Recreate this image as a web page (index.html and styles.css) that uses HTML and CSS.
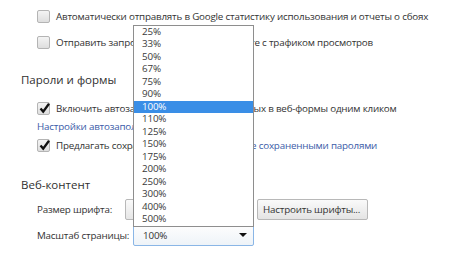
FILE: index.html
```html
<!DOCTYPE html>
<html lang="ru">
<head>
<meta charset="utf-8">
<link rel="stylesheet" href="styles.css">
</head>
<body>
<div class="page">
  <div class="row r1">
    <span class="cb"></span>
    <span class="txt">Автоматически отправлять в Google статистику использования и отчеты о сбоях</span>
  </div>
  <div class="row r2">
    <span class="cb"></span>
    <span class="txt">Отправить запрос «Не отслеживать» вместе с трафиком просмотров</span>
  </div>

  <h2 class="head h1">Пароли и формы</h2>
  <div class="row r3">
    <span class="cb"><svg viewBox="0 0 13 13" width="13" height="13"><path d="M2.5 6.5 L5.2 9.6 L11 1.8" fill="none" stroke="#111" stroke-width="2.3"/></svg></span>
    <span class="txt">Включить автозаполнение для ввода данных в веб-формы одним кликом</span>
  </div>
  <a class="link autofill">Настройки автозаполнения</a>
  <div class="row r4">
    <span class="cb"><svg viewBox="0 0 13 13" width="13" height="13"><path d="M2.5 6.5 L5.2 9.6 L11 1.8" fill="none" stroke="#111" stroke-width="2.3"/></svg></span>
    <span class="txt">Предлагать сохранять пароли. <a class="link">Управление сохраненными паролями</a></span>
  </div>

  <h2 class="head h2">Веб-контент</h2>
  <div class="frow font">
    <span class="lbl">Размер шрифта:</span>
    <span class="sel fontsel">Средний</span>
    <span class="btn">Настроить шрифты...</span>
  </div>
  <div class="frow zoom">
    <span class="lbl">Масштаб страницы:</span>
    <span class="sel zoomsel">
      <span class="val">100%</span>
      <span class="arrow"></span>
      <ul class="menu">
        <li>25%</li><li>33%</li><li>50%</li><li>67%</li><li>75%</li><li>90%</li>
        <li class="on">100%</li><li>110%</li><li>125%</li><li>150%</li><li>175%</li>
        <li>200%</li><li>250%</li><li>300%</li><li>400%</li><li>500%</li>
      </ul>
    </span>
  </div>
</div>
</body>
</html>
```

FILE: styles.css
```css
html, body {
  margin: 0;
  padding: 0;
  background: #fff;
}
body {
  font-family: "Open Sans", "Noto Sans", sans-serif;
  font-size: 9.8px;
  letter-spacing: -0.2px;
  color: #333;
  width: 474px;
  height: 260px;
  overflow: hidden;
}
.page {
  padding-left: 21px;
}
.row {
  display: flex;
  align-items: center;
  height: 20px;
  margin-left: 16px;
  white-space: nowrap;
}
.r1 { margin-top: 6px; }
.r2 { margin-top: 6px; }
.cb {
  width: 11px;
  height: 11px;
  border: 1px solid #b4b4b4;
  border-radius: 2px;
  background: linear-gradient(#f4f4f4, #dedede);
  margin-right: 6px;
  position: relative;
  flex: none;
}
.cb svg {
  position: absolute;
  left: 0;
  top: -1px;
}
.head {
  margin: 0;
  font-weight: normal;
  font-size: 11.5px;
  letter-spacing: 0;
  height: 20px;
  line-height: 20px;
  color: #303030;
}
.h1 { margin-top: 18px; }
.r3 { margin-top: 8px; }
.link {
  color: #3b5ba8;
  text-decoration: none;
}
.autofill {
  display: block;
  margin-left: 16px;
  height: 17px;
  line-height: 17px;
}
.r4 { margin-top: 0; }
.h2 { margin-top: 20px; }
.frow {
  display: flex;
  align-items: center;
  margin-left: 16px;
  white-space: nowrap;
}
.font { margin-top: 3px; height: 22px; }
.zoom { margin-top: 4px; height: 22px; }
.font .lbl { margin-right: 13px; }
.zoom .lbl { margin-right: 4px; }
.sel {
  box-sizing: border-box;
  height: 21px;
  border: 1px solid #b8b8b8;
  border-radius: 2px;
  background: linear-gradient(#fafafa, #e6e6e6);
  display: flex;
  align-items: center;
  padding-left: 9px;
  position: relative;
}
.fontsel { width: 128px; margin-right: 4px; }
.btn {
  box-sizing: border-box;
  height: 21px;
  width: 111px;
  padding: 0 5px;
  border: 1px solid #b8b8b8;
  border-radius: 2px;
  background: linear-gradient(#fafafa, #e4e4e4);
  display: flex;
  align-items: center;
}
.zoomsel {
  width: 121px;
  border-color: #8ab6e6;
  background: linear-gradient(#fdfdfd, #eef3f8);
}
.val { flex: 1; }
.arrow {
  width: 0;
  height: 0;
  border-left: 4px solid transparent;
  border-right: 4px solid transparent;
  border-top: 4px solid #111;
  margin-right: 6px;
}
.menu {
  position: absolute;
  left: -1px;
  bottom: 100%;
  width: 121px;
  box-sizing: border-box;
  margin: 0 0 -1px 0;
  padding: 0;
  list-style: none;
  background: #fff;
  border: 1px solid #8e8e8e;
}
.menu li {
  height: 12.5px;
  line-height: 12.5px;
  padding-left: 8px;
  color: #3a3a3a;
}
.menu li.on {
  background: #3a8ee6;
  color: #fff;
}
```
